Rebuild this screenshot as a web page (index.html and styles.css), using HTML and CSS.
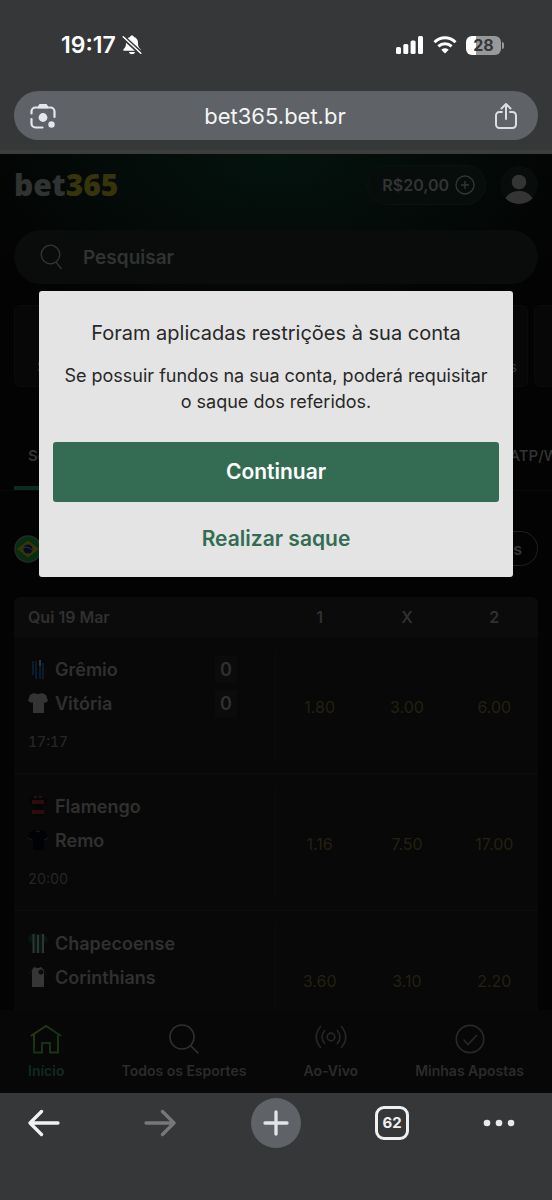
FILE: index.html
```html
<!DOCTYPE html>
<html lang="pt-BR">
<head>
  <meta charset="UTF-8">
  <meta name="viewport" content="width=device-width, initial-scale=1">
  <title>bet365</title>
  <link rel="stylesheet" href="styles.css">
</head>
<body>

<header class="browser-top">
  <div class="status">
    <div class="status-left">
      <span class="clock">19:17</span>
      <svg width="20" height="20" viewBox="0 0 20 20" fill="#fff">
        <path d="M10 .5c1.1 0 1.8.6 2 1.5 2.600.8 4 2.900 4 6 0 3.600.8 4.600 2.300 6 .8.8.4 1.800-.8 1.800h-15c-1.200 0-1.600-1-.8-1.800C3.200 12.600 4 11.600 4 8c0-3.100 1.400-5.200 4-6 .2-.9.900-1.500 2-1.500z"/>
        <path d="M7 17h6c-.4 1.500-1.500 2.200-3 2.200S7.400 18.500 7 17z"/>
        <path d="M.5 1.500 19 18.500" stroke="#363739" stroke-width="4.500"/>
        <path d="M1.200 1.800 18.800 18.200" stroke="#fff" stroke-width="1.500" stroke-linecap="round"/>
      </svg>
    </div>
    <div class="status-right">
      <svg width="28" height="18" viewBox="0 0 28 18" fill="#fff">
        <rect x="0" y="11" width="5" height="7" rx="1.500"/>
        <rect x="7.300" y="8" width="5" height="10" rx="1.500"/>
        <rect x="14.600" y="4.500" width="5" height="13.500" rx="1.500"/>
        <rect x="22" y="0" width="5" height="18" rx="1.500"/>
      </svg>
      <svg width="24" height="18" viewBox="0 0 24 18" fill="none" stroke="#fff" stroke-width="3">
        <path d="M1.500 6.300C7.400.3 16.600.3 22.500 6.300"/>
        <path d="M5.400 10.400c3.800-3.700 9.400-3.700 13.200 0"/>
        <path d="M12 17.500 8.300 13.700c2.200-2 5.200-2 7.400 0z" fill="#fff" stroke="none"/>
      </svg>
      <div class="battery"><span>28</span></div>
    </div>
  </div>
  <div class="url-bar">
    <button class="icon-btn" aria-label="Lens">
      <svg width="26" height="26" viewBox="0 0 26 26" fill="none" stroke="#e4e6ee" stroke-width="2.200" stroke-linecap="round">
        <path d="M1.500 10.500V8.500a4 4 0 0 1 4-4h15a4 4 0 0 1 4 4v5.500M1.500 16v4.500a4 4 0 0 0 4 4h7"/>
        <path d="M8 4.500 9.500 1.500h7L18 4.500z" fill="#e4e6ee" stroke-width="1"/>
        <circle cx="13" cy="14.500" r="4.400" fill="#e4e6ee" stroke="none"/>
        <circle cx="21.500" cy="21.500" r="3.200" fill="#e4e6ee" stroke="none"/>
      </svg>
    </button>
    <span class="url">bet365.bet.br</span>
    <button class="icon-btn" aria-label="Compartilhar">
      <svg width="24" height="28" viewBox="0 0 24 28" fill="none" stroke="#dcdee2" stroke-width="2" stroke-linecap="round" stroke-linejoin="round">
        <path d="M8 10H5.500A3.500 3.500 0 0 0 2 13.500v9A3.500 3.500 0 0 0 5.500 26h13a3.500 3.500 0 0 0 3.500-3.500v-9a3.500 3.500 0 0 0-3.500-3.500H16M12 17V2M7.500 6.500 12 2l4.500 4.500"/>
      </svg>
    </button>
  </div>
</header>

<main class="site">
  <div class="page">
    <div class="site-head">
      <a href="#" class="logo">bet<span>365</span></a>
      <div class="account">
        <button class="balance">R$20,00
          <svg width="20" height="20" viewBox="0 0 20 20" fill="none" stroke="#333635" stroke-width="1.400">
            <circle cx="10" cy="10" r="9"/>
            <path d="M10 6v8M6 10h8"/>
          </svg>
        </button>
        <button class="avatar" aria-label="Conta">
          <svg width="38" height="38" viewBox="0 0 38 38" fill="#343434">
            <circle cx="19" cy="16" r="7.300"/>
            <path d="M5 33c3-5.500 8-8 14-8s11 2.500 14 8c-3.500 4-8.500 6-14 6S8.500 37 5 33z"/>
          </svg>
        </button>
      </div>
    </div>

    <label class="search">
      <svg width="24" height="26" viewBox="0 0 24 26" fill="none" stroke="#343635" stroke-width="1.300">
        <circle cx="10.500" cy="10.500" r="9.300"/>
        <path d="M16 18.200 21.500 25"/>
      </svg>
      <input type="text" placeholder="Pesquisar" aria-label="Pesquisar">
    </label>

    <div class="cards">
      <a href="#" class="card">Superodds</a>
      <a href="#" class="card"></a>
      <a href="#" class="card"></a>
      <a href="#" class="card last">Cassinos</a>
      <a href="#" class="card"></a>
    </div>

    <nav class="tabs">
      <a href="#" class="tab active">Série A</a>
      <a href="#" class="tab">ATP/WTA</a>
    </nav>

    <div class="league">
      <svg width="28" height="28" viewBox="0 0 28 28">
        <circle cx="14" cy="14" r="13" fill="#052d10" stroke="#262a27" stroke-width="1.400"/>
        <path d="M14 5.500 25 14 14 22.500 3 14z" fill="#38340a"/>
        <circle cx="14" cy="14" r="4.600" fill="#050d24"/>
        <path d="M9.800 12.500c3-.8 6 .2 8.400 2.800" fill="none" stroke="#30343a"/>
      </svg>
      <button class="pill">Jogos</button>
    </div>

    <table class="matches">
      <thead>
        <tr><th class="day">Qui 19 Mar</th><th>1</th><th>X</th><th>2</th></tr>
      </thead>
      <tbody>
        <tr>
          <td>
            <div class="match">
              <div class="team">
                <svg width="20" height="22" viewBox="0 0 20 22">
                  <path d="M6 1 1 5l2 5 2-1v12h10V9l2 1 2-5-5-4q-4 2-8 0z" fill="#05080a"/>
                  <path d="M5 3v14M8 3v18M12 8v13M15 5v16" stroke="#09202f" stroke-width="1.800"/>
                  <path d="M12 2v6" stroke="#303538" stroke-width="2"/>
                </svg>
                Grêmio <span class="score">0</span>
              </div>
              <div class="team">
                <svg width="20" height="22" viewBox="0 0 20 22">
                  <path d="M6 1 2 3 0 9l4 2 1-1v11h11V10l1 1 3-2-2-6-4-2q-4 2-8 0z" fill="#343434"/>
                </svg>
                Vitória <span class="score">0</span>
              </div>
              <div class="time live">17:17</div>
            </div>
          </td>
          <td>1.80</td><td>3.00</td><td>6.00</td>
        </tr>
        <tr>
          <td>
            <div class="match">
              <div class="team">
                <svg width="20" height="22" viewBox="0 0 20 22">
                  <path d="M6 1 1 5l2 5 2-1v12h10V9l2 1 2-5-5-4q-4 2-8 0z" fill="#050505"/>
                  <path d="M4 7h12M4 17h12" stroke="#2d0c10" stroke-width="4"/>
                  <path d="M6 2h3M11 2h3" stroke="#2d0c10" stroke-width="2"/>
                </svg>
                Flamengo
              </div>
              <div class="team">
                <svg width="20" height="22" viewBox="0 0 20 22">
                  <path d="M6 1 2 3 0 9l4 2 1-1v11h11V10l1 1 3-2-2-6-4-2q-4 2-8 0z" fill="#010206"/>
                  <path d="M8 2q2 2 4 0M0 9l4 2M16 11l4-2" fill="none" stroke="#1c1d20"/>
                </svg>
                Remo
              </div>
              <div class="time">20:00</div>
            </div>
          </td>
          <td>1.16</td><td>7.50</td><td>17.00</td>
        </tr>
        <tr>
          <td>
            <div class="match">
              <div class="team">
                <svg width="20" height="22" viewBox="0 0 20 22">
                  <path d="M6 1 1 4 0 9l4 2 1-1v11h11V10l1 1 3-2-2-5-4-3q-4 2-8 0z" fill="#071611"/>
                  <path d="M5.500 2v19M10 3v18M15 2v19" stroke="#303534" stroke-width="2"/>
                </svg>
                Chapecoense
              </div>
              <div class="team">
                <svg width="20" height="22" viewBox="0 0 20 22">
                  <path d="M6 1 4 4v17h12V4l-3-3q-3 2-7 0z" fill="#363636"/>
                  <circle cx="13" cy="6" r="2.500" fill="#0d0d0d"/>
                  <path d="M4 4 1 8M16 4l3 5" stroke="#151515"/>
                </svg>
                Corinthians
              </div>
            </div>
          </td>
          <td>3.60</td><td>3.10</td><td>2.20</td>
        </tr>
      </tbody>
    </table>
  </div>

  <nav class="bottom-nav">
    <a href="#" class="active">
      <svg width="32" height="32" viewBox="0 0 32 32" fill="none" stroke="url(#home)" stroke-width="2">
        <defs>
          <linearGradient id="home" x1="0" y1="0" x2="1" y2="1">
            <stop offset="0" stop-color="#3c390a"/>
            <stop offset=".5" stop-color="#15301a"/>
            <stop offset="1" stop-color="#1c3511"/>
          </linearGradient>
        </defs>
        <path d="M.800 13 16 3l15.200 10M4 11v18.500h8V20h8v9.500h8V11"/>
      </svg>
      Início
    </a>
    <a href="#">
      <svg width="32" height="32" viewBox="0 0 32 32" fill="none" stroke="#303030" stroke-width="1.700">
        <circle cx="14" cy="14" r="12"/>
        <path d="m22.500 22.500 8 8"/>
      </svg>
      Todos os Esportes
    </a>
    <a href="#">
      <svg width="32" height="32" viewBox="0 0 32 32" fill="none" stroke="#262626" stroke-width="1.700">
        <circle cx="16" cy="14" r="3.800"/>
        <path d="M10 7q-6 7 0 14M22 7q6 7 0 14M6 3q-9.500 11 0 22M26 3q9.500 11 0 22"/>
      </svg>
      Ao-Vivo
    </a>
    <a href="#">
      <svg width="32" height="32" viewBox="0 0 32 32" fill="none" stroke="#282828" stroke-width="1.700">
        <circle cx="16" cy="16" r="13.700"/>
        <path d="m9.500 16.500 4.500 5 9-9.500"/>
      </svg>
      Minhas Apostas
    </a>
  </nav>

  <div class="overlay">
    <div class="modal" role="dialog" aria-labelledby="modal-title">
      <h2 id="modal-title">Foram aplicadas restrições à sua conta</h2>
      <p>Se possuir fundos na sua conta, poderá requisitar o saque dos referidos.</p>
      <button class="btn primary">Continuar</button>
      <button class="btn">Realizar saque</button>
    </div>
  </div>
</main>

<footer class="browser-bottom">
  <button aria-label="Voltar">
    <svg width="32" height="28" viewBox="0 0 32 28" fill="none" stroke="#f1f2f4" stroke-width="3.300" stroke-linecap="round" stroke-linejoin="round">
      <path d="M30 14H2M13.500 2.500 2 14l11.500 11.500"/>
    </svg>
  </button>
  <button aria-label="Avançar">
    <svg width="32" height="28" viewBox="0 0 32 28" fill="none" stroke="#77787a" stroke-width="3.300" stroke-linecap="round" stroke-linejoin="round">
      <path d="M2 14h28M18.500 2.500 30 14 18.500 25.500"/>
    </svg>
  </button>
  <button class="new-tab" aria-label="Nova guia">
    <svg width="26" height="26" viewBox="0 0 26 26" stroke="#e3e4e8" stroke-width="3.300" stroke-linecap="round">
      <path d="M13 2v22M2 13h22"/>
    </svg>
  </button>
  <button aria-label="Guias"><span class="tab-count">62</span></button>
  <button class="more" aria-label="Mais">
    <svg width="32" height="8" viewBox="0 0 32 8" fill="#e8e9ec">
      <circle cx="4" cy="4" r="3.300"/><circle cx="16" cy="4" r="3.300"/><circle cx="28" cy="4" r="3.300"/>
    </svg>
  </button>
</footer>

</body>
</html>
```
FILE: styles.css
```css
* {
  box-sizing: border-box;
}

body {
  margin: 0;
  height: 100vh;
  display: flex;
  flex-direction: column;
  background: #363739;
  font-family: Inter, "Liberation Sans", sans-serif;
  color: #343434;
}

button {
  padding: 0;
  border: 0;
  background: none;
  font: inherit;
  color: inherit;
  cursor: pointer;
}

a {
  color: inherit;
  text-decoration: none;
}

svg {
  display: block;
  flex-shrink: 0;
}

/* Browser chrome */
.browser-top {
  flex-shrink: 0;
  padding: 32px 14px 10px;
  border-bottom: 4px solid #3c3d3d;
}

.status {
  display: flex;
  justify-content: space-between;
  align-items: center;
  height: 26px;
  margin-bottom: 33px;
  padding: 0 37px 0 47px;
}

.status-left,
.status-right {
  display: flex;
  align-items: center;
}

.status-left {
  gap: 6px;
}

.status-right {
  gap: 9px;
}

.clock {
  font-size: 23px;
  font-weight: 600;
  color: #fff;
}

.battery {
  position: relative;
  width: 35px;
  height: 19px;
  border-radius: 6px;
  background: linear-gradient(90deg, #fff 30%, #98999a 30%);
  font-size: 16px;
  font-weight: 700;
  line-height: 19px;
  text-align: center;
  color: #363739;
}

.battery::after {
  content: "";
  position: absolute;
  top: 6px;
  right: -3px;
  width: 2px;
  height: 7px;
  border-radius: 0 2px 2px 0;
  background: #98999a;
}

.url-bar {
  display: flex;
  justify-content: space-between;
  align-items: center;
  height: 49px;
  padding: 0 20px 0 16px;
  border-radius: 25px;
  background: #5f6266;
}

.url {
  font-size: 22px;
  color: #f4f5f6;
}

/* Site */
.site {
  position: relative;
  flex: 1;
  min-height: 0;
  display: flex;
  flex-direction: column;
  overflow: hidden;
  background: #030303;
}

.page {
  flex: 1;
  min-height: 0;
  overflow: hidden;
  padding: 11px 14px 0;
  background: radial-gradient(ellipse 60% 180px at 50% 0, #04130d, #030303);
}

.site-head,
.account {
  display: flex;
  justify-content: space-between;
  align-items: center;
}

.account {
  gap: 14px;
}

.logo {
  font-family: "Noto Sans", "Open Sans", sans-serif;
  font-size: 30px;
  font-weight: 900;
  line-height: 40px;
  color: #303332;
}

.logo span {
  color: #37330b;
}

.balance {
  display: flex;
  align-items: center;
  gap: 6px;
  height: 40px;
  padding: 0 10px 0 14px;
  border: 1px solid #0b1311;
  border-radius: 20px;
  background: #070d0b;
  font-size: 16px;
  font-weight: 600;
}

.avatar {
  width: 38px;
  height: 38px;
  border-radius: 50%;
  overflow: hidden;
  background: #080c0b;
}

.search {
  display: flex;
  align-items: center;
  gap: 19px;
  height: 54px;
  margin-top: 25px;
  padding: 0 26px;
  border-radius: 27px;
  background: #090c0b;
}

.search input {
  flex: 1;
  min-width: 0;
  padding: 0;
  border: 0;
  outline: 0;
  background: none;
  font: inherit;
  font-size: 19px;
  font-weight: 600;
}

.search input::placeholder {
  color: #303332;
}

.cards {
  display: grid;
  grid-template-columns: repeat(5, 124px);
  gap: 6px;
  margin-top: 21px;
}

.card {
  height: 82px;
  padding: 52px 10px 0 22px;
  border: 1px solid #0b0b0b;
  border-radius: 6px;
  background: #070707;
  font-size: 14px;
}

.card.last {
  text-align: right;
}

.tabs {
  display: flex;
  justify-content: space-between;
  margin: 45px -14px 0;
  padding-left: 14px;
  border-bottom: 1px solid #090909;
}

.tab {
  padding: 0 14px 6px;
  border-bottom: 4px solid transparent;
  font-size: 15px;
  font-weight: 500;
  line-height: 48px;
}

.tab:last-child {
  margin-right: -40px;
}

.tab.active {
  border-color: #0d2c20;
  font-weight: 600;
}

.league {
  display: flex;
  justify-content: space-between;
  align-items: center;
  margin: 40px 0 31px;
}

.pill {
  height: 35px;
  padding: 0 15px;
  border: 1px solid #202020;
  border-radius: 18px;
  font-size: 16px;
  font-weight: 600;
}

.matches {
  width: 100%;
  table-layout: fixed;
  border-spacing: 0;
  border-radius: 6px 6px 0 0;
  overflow: hidden;
  background: #080808;
}

.matches th {
  width: 16.66%;
  height: 40px;
  padding: 0;
  background: #0b0b0b;
  font-size: 16px;
  font-weight: 600;
  color: #303030;
}

.matches .day {
  width: 50%;
  padding-left: 14px;
  text-align: left;
}

.matches td {
  padding: 4px 0 0;
  border-bottom: 1px solid #0c0c0c;
  font-size: 16px;
  text-align: center;
  color: #242110;
}

.matches td:first-child {
  padding: 12px 0;
  text-align: left;
}

.match {
  height: 112px;
  padding: 3px 38px 0 14px;
  border-right: 1px solid #0c0c0c;
  color: #303030;
}

.team {
  display: flex;
  align-items: center;
  gap: 7px;
  height: 34px;
  font-size: 18px;
  font-weight: 600;
}

.score {
  width: 22px;
  margin-left: auto;
  background: #0b0b0b;
  line-height: 27px;
  text-align: center;
}

.time {
  margin-top: 10px;
  font-size: 14px;
  line-height: 24px;
  font-variant-numeric: tabular-nums;
  color: #262626;
}

.time.live {
  font-weight: 500;
}

.bottom-nav {
  flex-shrink: 0;
  display: flex;
  justify-content: space-between;
  height: 83px;
  padding: 13px 28px 0;
  background: #070707;
  font-size: 14px;
  font-weight: 600;
  color: #2b2b2b;
}

.bottom-nav a {
  display: flex;
  flex-direction: column;
  align-items: center;
  gap: 7px;
}

.bottom-nav .active {
  color: #0c2c20;
}

/* Restriction dialog */
.overlay {
  position: absolute;
  inset: 0;
  padding: 137px 39px 0;
}

.modal {
  padding: 26px 14px 8px;
  border-radius: 3px;
  background: #e4e4e4;
  text-align: center;
  color: #282828;
}

.modal h2 {
  margin: 0;
  font-size: 20px;
  font-weight: 400;
  line-height: 32px;
}

.modal p {
  margin: 14px 0 27px;
  padding: 0 8px;
  font-size: 18px;
  line-height: 26px;
}

.btn {
  display: block;
  width: 100%;
  border-radius: 3px;
  font-size: 21px;
  font-weight: 600;
  line-height: 60px;
  color: #336c53;
}

.btn.primary {
  background: #336c53;
  color: #fff;
}

.btn + .btn {
  margin-top: 7px;
}

/* Browser toolbar */
.browser-bottom {
  flex-shrink: 0;
  display: flex;
  justify-content: space-between;
  height: 107px;
  padding: 5px 19px 0;
}

.browser-bottom button {
  display: flex;
  align-items: center;
  justify-content: center;
  width: 50px;
  height: 50px;
  border-radius: 50%;
}

.browser-bottom .new-tab {
  background: #5f6266;
}

.browser-bottom .more {
  justify-content: flex-start;
}

.tab-count {
  width: 34px;
  height: 34px;
  border: 3px solid #eff0f2;
  border-radius: 9px;
  font-size: 15px;
  font-weight: 700;
  line-height: 28px;
  color: #eff0f2;
}
```
